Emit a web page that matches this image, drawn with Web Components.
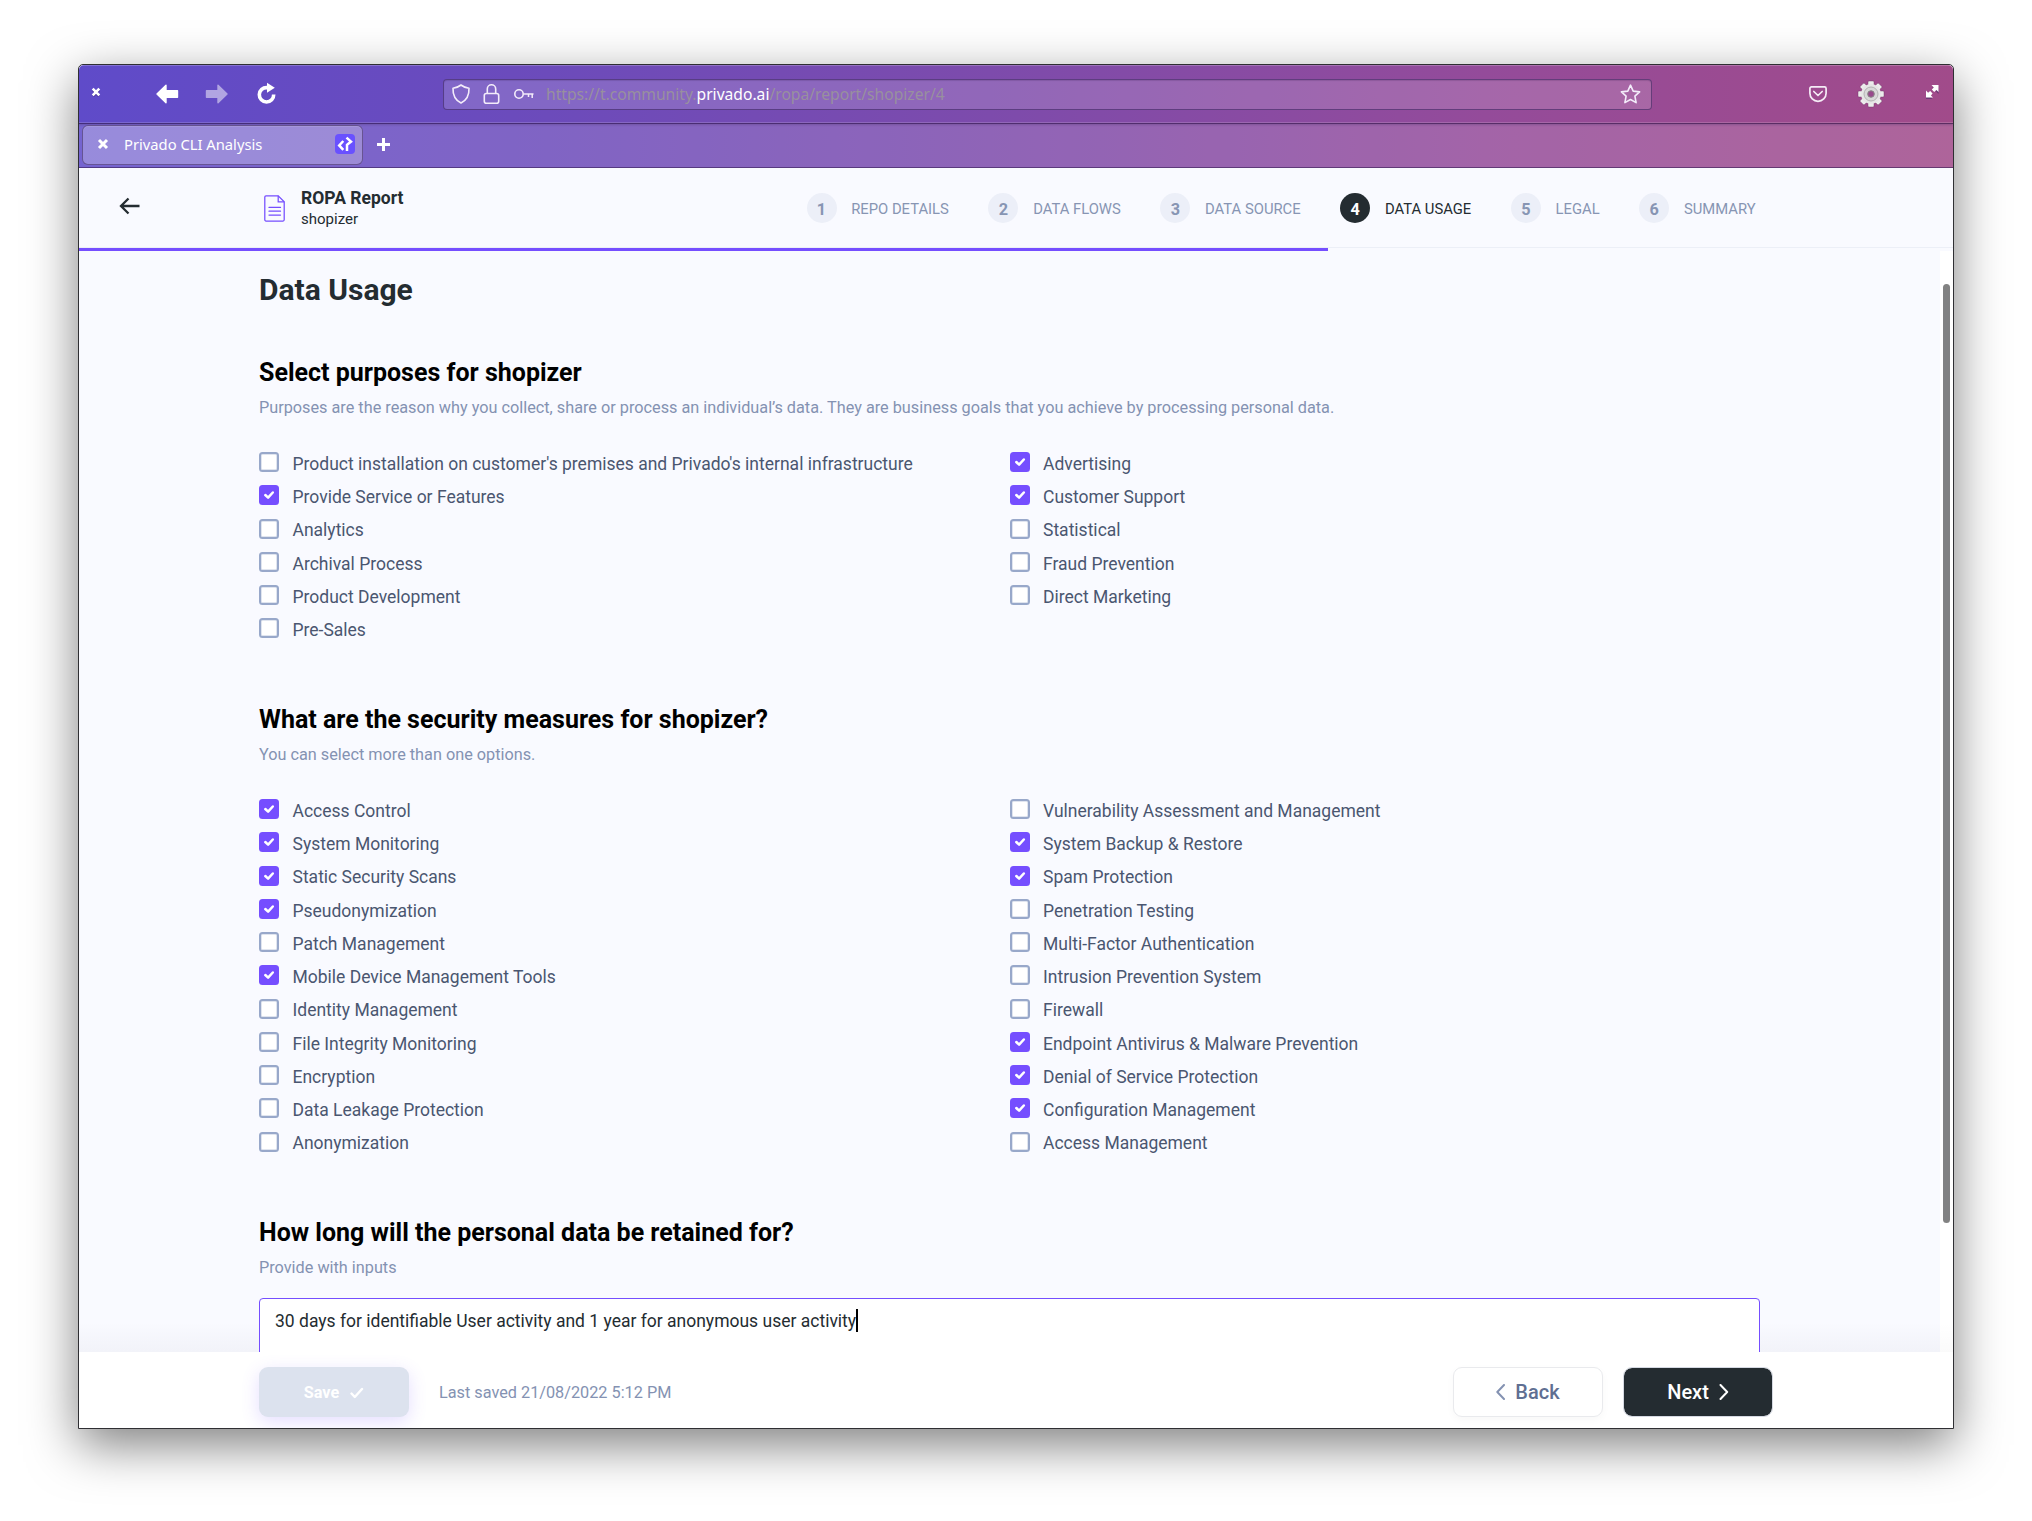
<!DOCTYPE html>
<html lang="en">
<head>
<meta charset="utf-8">
<title>Privado CLI Analysis</title>
<style>
body{margin:0;background:#fff;font-family:Roboto,"Liberation Sans",sans-serif;height:1521px;overflow:hidden}
</style>
</head>
<body>
<browser-window>
  <nav-bar slot="chrome"></nav-bar>
  <tab-bar slot="chrome">Privado CLI Analysis</tab-bar>
  <report-header>
    <span slot="title">ROPA Report</span>
    <span slot="repo">shopizer</span>
    <step-item n="1">REPO DETAILS</step-item>
    <step-item n="2">DATA FLOWS</step-item>
    <step-item n="3">DATA SOURCE</step-item>
    <step-item n="4" active>DATA USAGE</step-item>
    <step-item n="5">LEGAL</step-item>
    <step-item n="6">SUMMARY</step-item>
  </report-header>
  <scroll-pane>
    <page-title>Data Usage</page-title>
    <question-block>
      <span slot="heading">Select purposes for shopizer</span>
      <span slot="hint">Purposes are the reason why you collect, share or process an individual’s data. They are business goals that you achieve by processing personal data.</span>
      <check-item slot="left">Product installation on customer's premises and Privado's internal infrastructure</check-item>
      <check-item slot="left" checked>Provide Service or Features</check-item>
      <check-item slot="left">Analytics</check-item>
      <check-item slot="left">Archival Process</check-item>
      <check-item slot="left">Product Development</check-item>
      <check-item slot="left">Pre-Sales</check-item>
      <check-item slot="right" checked>Advertising</check-item>
      <check-item slot="right" checked>Customer Support</check-item>
      <check-item slot="right">Statistical</check-item>
      <check-item slot="right">Fraud Prevention</check-item>
      <check-item slot="right">Direct Marketing</check-item>
    </question-block>
    <question-block>
      <span slot="heading">What are the security measures for shopizer?</span>
      <span slot="hint">You can select more than one options.</span>
      <check-item slot="left" checked>Access Control</check-item>
      <check-item slot="left" checked>System Monitoring</check-item>
      <check-item slot="left" checked>Static Security Scans</check-item>
      <check-item slot="left" checked>Pseudonymization</check-item>
      <check-item slot="left">Patch Management</check-item>
      <check-item slot="left" checked>Mobile Device Management Tools</check-item>
      <check-item slot="left">Identity Management</check-item>
      <check-item slot="left">File Integrity Monitoring</check-item>
      <check-item slot="left">Encryption</check-item>
      <check-item slot="left">Data Leakage Protection</check-item>
      <check-item slot="left">Anonymization</check-item>
      <check-item slot="right">Vulnerability Assessment and Management</check-item>
      <check-item slot="right" checked>System Backup &amp; Restore</check-item>
      <check-item slot="right" checked>Spam Protection</check-item>
      <check-item slot="right">Penetration Testing</check-item>
      <check-item slot="right">Multi-Factor Authentication</check-item>
      <check-item slot="right">Intrusion Prevention System</check-item>
      <check-item slot="right">Firewall</check-item>
      <check-item slot="right" checked>Endpoint Antivirus &amp; Malware Prevention</check-item>
      <check-item slot="right" checked>Denial of Service Protection</check-item>
      <check-item slot="right" checked>Configuration Management</check-item>
      <check-item slot="right">Access Management</check-item>
    </question-block>
    <question-block>
      <span slot="heading">How long will the personal data be retained for?</span>
      <span slot="hint">Provide with inputs</span>
      <answer-box slot="answer">30 days for identifiable User activity and 1 year for anonymous user activity</answer-box>
    </question-block>
  </scroll-pane>
  <action-bar></action-bar>
</browser-window>

<script>
const define = (name, html) => {
  const template = document.createElement('template');
  template.innerHTML = html;
  customElements.define(name, class extends HTMLElement {
    constructor() {
      super();
      this.attachShadow({ mode: 'open' }).append(template.content.cloneNode(true));
    }
    connectedCallback() {
      const number = this.shadowRoot.querySelector('[data-number]');
      if (number) number.textContent = this.getAttribute('n');
    }
  });
};

define('browser-window', `
<style>
:host{display:flex;flex-direction:column;box-sizing:border-box;width:1876px;height:1365px;margin:64px 78px 0;border:1px solid #2f2f33;border-radius:5px 5px 0 0;background:#f9faff;box-shadow:0 16px 50px rgba(0,0,0,.5)}
.chrome{display:flex;flex-direction:column;flex:none;height:103px;overflow:hidden;border-radius:5px 5px 0 0;background:linear-gradient(90deg,#5f4bc9 0%,#6c4bbb 25%,#7e4bab 50%,#944b9a 75%,#a14b8a 100%)}
</style>
<div class="chrome"><slot name="chrome"></slot></div>
<slot></slot>`);

define('nav-bar', `
<style>
:host{display:flex;align-items:center;box-sizing:border-box;height:59px;flex:none;border-bottom:1px solid rgba(50,28,75,.62);box-shadow:inset 0 1px rgba(255,255,255,.22),inset 0 -1px rgba(255,255,255,.16),0 1px 2px rgba(50,20,80,.35)}
svg{display:block;flex:none;overflow:visible}
.close{margin:-5px 0 0 12px}
.back{margin:-1px 0 0 55px}.fwd{margin:-1px 0 0 26px;opacity:.5}.reload{margin:-2px 0 0 29px}
.url{display:flex;align-items:center;box-sizing:border-box;width:1209px;height:31px;margin:0 0 0 166px;border:1px solid rgba(60,35,95,.62);border-radius:4px;background:rgba(255,255,255,.16);box-shadow:inset 0 1px 1px rgba(50,20,80,.18);font:15.65px/22px "Noto Sans",sans-serif;color:#98909e;padding-left:8px}
.url b{font-weight:400;color:#fff}
.url p{margin:0 0 0 12px;white-space:nowrap;flex:1}
.lock{margin-left:13px}.key{margin-left:14px}.star{margin-right:10px}
.pocket{margin-left:157px}.gear{margin-left:30px}.expand{margin:-5px 0 0 41px}
</style>
<svg class="close" width="10" height="10" viewBox="0 0 10 10"><path d="M2 3l6 6M8 3l-6 6" stroke="#38256f" stroke-opacity=".6" stroke-width="2.6"/><path d="M1.7 1.7l6.6 6.6M8.3 1.7L1.7 8.3" stroke="#fff" stroke-width="2.6"/></svg>
<svg class="back" width="23" height="20" viewBox="0 0 23 20"><path d="M1 10L10 1.2v5.6h11.5v6.4H10v5.6z" fill="#fff" stroke="#fff" stroke-width="1.4" stroke-linejoin="round"/></svg>
<svg class="fwd" width="23" height="20" viewBox="0 0 23 20"><path d="M22 10L13 1.2v5.6H1.5v6.4H13v5.6z" fill="#fff" stroke="#fff" stroke-width="1.4" stroke-linejoin="round"/></svg>
<svg class="reload" width="20" height="22" viewBox="0 0 20 22"><path d="M16.700 12.500A7.200 7.200 0 1 1 10 5.600h2" fill="none" stroke="#fff" stroke-width="3.600"/><path d="M10 .8l7.800 5L10 10.800z" fill="#fff"/></svg>
<div class="url">
  <svg width="18" height="20" viewBox="0 0 18 20"><path d="M9 1c2.7 2.1 5.3 3 8 3.2.3 7-1.600 11.500-8 14.800C2.600 15.700.7 11.200 1 4.200 3.700 4 6.300 3.100 9 1z" fill="none" stroke="#f3ecfa" stroke-width="1.6" stroke-linejoin="round"/></svg>
  <svg class="lock" width="17" height="20" viewBox="0 0 17 20"><rect x="1.300" y="9.500" width="14.400" height="9.700" rx="2" fill="none" stroke="#f3ecfa" stroke-width="1.600"/><path d="M4.300 9.500V5a4.200 4.200 0 0 1 8.400 0v4.500" fill="none" stroke="#f3ecfa" stroke-width="1.600"/></svg>
  <svg class="key" width="20" height="12" viewBox="0 0 20 12"><circle cx="5" cy="6" r="4.200" fill="none" stroke="#f3ecfa" stroke-width="1.600"/><path d="M9.200 6H19.500M18.200 6v4M14.500 6v3" fill="none" stroke="#f3ecfa" stroke-width="1.500"/></svg>
  <p>https://t.community.<b>privado.ai</b>/ropa/report/shopizer/4</p>
  <svg class="star" width="21" height="20" viewBox="0 0 21 20"><path d="M10.500 1.200l2.700 5.900 6.400.8-4.700 4.300 1.200 6.400-5.600-3.100-5.600 3.100 1.200-6.400L1.400 7.900l6.400-.8z" fill="none" stroke="#f3ecfa" stroke-width="1.600" stroke-linejoin="round"/></svg>
</div>
<svg class="pocket" width="18" height="16" viewBox="0 0 18 16"><path d="M2.500.9h13A1.600 1.600 0 0 1 17.100 2.500v4.700a8.100 8.100 0 0 1-16.200 0V2.500A1.600 1.600 0 0 1 2.500.9z" fill="none" stroke="#f5ecf6" stroke-width="1.700"/><path d="M4.800 5.500L9 9.500l4.200-4" fill="none" stroke="#f5ecf6" stroke-width="1.700" stroke-linecap="round" stroke-linejoin="round"/></svg>
<svg class="gear" width="28" height="28" viewBox="-14 -14 28 28"><g fill="#ececec" stroke="#6d3463" stroke-opacity=".55" stroke-width=".8"><rect x="-3" y="-13" width="6" height="26" rx="1"/><rect x="-3" y="-13" width="6" height="26" rx="1" transform="rotate(45)"/><rect x="-3" y="-13" width="6" height="26" rx="1" transform="rotate(90)"/><rect x="-3" y="-13" width="6" height="26" rx="1" transform="rotate(135)"/></g><circle r="10" fill="#e6e6e6"/><circle r="7" fill="#d8d8d8" stroke="#b4b4b4" stroke-width="1"/><circle r="3.300" fill="#98498c" stroke="#888" stroke-width="1"/></svg>
<svg class="expand" width="13" height="14" viewBox="0 0 13 14"><path d="M6 2.500h6.500V9zM0 7.500V14h6.500z" fill="#4a2b68" opacity=".6"/><path d="M5.500 0H12.500V7l-2.100-2.100L8.200 7 5.800 4.600 7.800 2.400zM0 5.500V12.500H7L4.900 10.400 6.600 8.400 4.200 6 2.100 7.800z" fill="#fff"/></svg>`);

define('tab-bar', `
<style>
:host{display:flex;align-items:flex-start;box-sizing:border-box;height:44px;border-bottom:1px solid rgba(55,28,85,.6);background:rgba(255,255,255,.14);padding:1px 0 0 3px}
.tab{display:flex;align-items:center;box-sizing:border-box;width:281px;height:40px;border:1px solid rgba(60,40,90,.55);border-radius:6px;background:rgba(255,255,255,.25);color:#fff;font:14.75px/20px "Noto Sans",sans-serif;padding:0 7px 0 14px;box-shadow:inset 0 1px rgba(255,255,255,.12)}
.tab p{margin:-2px 0 0 15px;flex:1;white-space:nowrap}
svg{display:block;flex:none}
.x{margin-top:-3px}.fav{margin-top:-2px}
.plus{margin:13px 0 0 14px}
</style>
<div class="tab">
  <svg class="x" width="12" height="12" viewBox="0 0 12 12"><path d="M2 2l8 8M10 2l-8 8" stroke="#fff" stroke-width="3"/></svg>
  <p><slot></slot></p>
  <svg class="fav" width="20" height="20" viewBox="0 0 20 20"><rect width="20" height="20" rx="4" fill="#6951ff"/><path d="M8.300 7L4.200 11.400l4.100 4.500M11.500 3.600L16 7.600l-4 3.200V17" fill="none" stroke="#fff" stroke-width="2.500"/></svg>
</div>
<svg class="plus" width="13" height="13" viewBox="0 0 13 13"><path d="M6.500 0v13M0 6.500h13" stroke="#fff" stroke-width="3"/></svg>`);

define('report-header', `
<style>
:host{display:block;flex:none;height:83px}
.bar{display:flex;box-sizing:border-box;height:80px;border-bottom:1px solid #eceff7;color:#242c31}
svg{display:block;flex:none}
.back{margin:29px 0 0 39.500px}
.doc{margin:26.500px 0 0 124px}
.names{display:flex;flex-direction:column;gap:2px;margin:20px 0 0 16.500px;width:505.500px}
.t{font:700 17.500px/20px Roboto,sans-serif}
.r{font:15px/18px Roboto,sans-serif}
.steps{display:flex;gap:39.600px;margin-top:25px}
.progress{height:3px;width:66.667%;background:#754eff}
</style>
<div class="bar">
  <svg class="back" width="21" height="18" viewBox="0 0 21 18"><path d="M20.500 9H2M9.500 1.500L2 9l7.500 7.500" fill="none" stroke="#242c31" stroke-width="2.300"/></svg>
  <svg class="doc" width="21" height="27" viewBox="0 0 21 27"><g fill="none" stroke="#754eff" stroke-width="1.250"><path d="M.8 2a1.200 1.200 0 0 1 1.200-1.200h12.200l6 6V24.800a1.200 1.200 0 0 1-1.200 1.200H2a1.200 1.200 0 0 1-1.200-1.200z"/><path d="M14.200.8V6.800H20.200"/><path d="M5 12.400h11.500M5 16.200h11.500M5 20h11.500" stroke-linecap="round"/></g></svg>
  <div class="names"><div class="t"><slot name="title"></slot></div><div class="r"><slot name="repo"></slot></div></div>
  <div class="steps"><slot></slot></div>
</div>
<div class="progress"></div>`);

define('step-item', `
<style>
:host{display:flex;gap:14.700px;height:30px;color:#8795b3;white-space:nowrap}
.n{box-sizing:border-box;width:30px;height:30px;padding-top:7px;border-radius:50%;background:#eceff8;text-align:center;font:700 16.250px/19px Roboto,sans-serif}
.l{font:14.800px/18px Roboto,sans-serif;padding-top:7px}
:host([active]){color:#242c31}
:host([active]) .n{background:#242c31;color:#fff}
</style>
<div class="n" data-number></div><div class="l"><slot></slot></div>`);

define('scroll-pane', `
<style>
:host{display:flex;flex:none;height:1101px;overflow:hidden}
.content{flex:1;padding:21px 180px 0;background:linear-gradient(to top,rgba(20,20,60,.032),rgba(20,20,60,0) 30px)}
.track{box-sizing:border-box;width:13px;padding:33px 3px 0;background:linear-gradient(to top,rgba(0,0,0,.02),rgba(0,0,0,0) 30px),#fff}
.thumb{width:7px;height:939px;border-radius:4px;background:#828282}
</style>
<div class="content"><slot></slot></div>
<div class="track"><div class="thumb"></div></div>`);

define('page-title', `
<style>:host{display:block;font:700 30px/35px Roboto,sans-serif;color:#242c31;margin-bottom:51px}</style>
<slot></slot>`);

define('question-block', `
<style>
:host{display:block;width:1501px;margin-bottom:67.500px}
h2{margin:0 0 11px;font:700 25px/29px Roboto,sans-serif;color:#000}
p{margin:0;font:16.250px/19px Roboto,sans-serif;color:#8492b2}
.cols{display:flex;padding-top:35px}
.cols>div{flex:1}
.answer{margin-top:-14px}
</style>
<h2><slot name="heading"></slot></h2>
<p><slot name="hint"></slot></p>
<div class="cols"><div><slot name="left"></slot></div><div><slot name="right"></slot></div></div>
<div class="answer"><slot name="answer"></slot></div>`);

define('check-item', `
<style>
:host{display:flex;gap:13.500px;height:33.250px}
.box{box-sizing:border-box;width:20px;height:20px;flex:none;border:2px solid #98a8ca;border-radius:3.500px;background:#fff;box-shadow:inset 0 0 0 1px rgba(152,168,202,.3)}
svg{display:none}
.label{margin-top:1.900px;font:17.500px/20px Roboto,sans-serif;color:#4a5670;white-space:nowrap}
:host([checked]) .box{border:0;background:#754eff;box-shadow:none}
:host([checked]) svg{display:block}
</style>
<div class="box"><svg width="20" height="20" viewBox="0 0 20 20"><path d="M6.300 10l2.800 2.700 4.700-5.200" fill="none" stroke="#fff" stroke-width="2.500" stroke-linecap="round" stroke-linejoin="round"/></svg></div>
<div class="label"><slot></slot></div>`);

define('answer-box', `
<style>
:host{display:flex;align-items:flex-start;box-sizing:border-box;width:1501px;height:120px;padding:12px 15px;border:1px solid #754eff;border-radius:4px;background:#fff;font:17.500px/20px Roboto,sans-serif;color:#242c31}
i{width:1.500px;height:23px;margin-top:-2px;background:#000}
</style>
<slot></slot><i></i>`);

define('action-bar', `
<style>
:host{display:flex;align-items:flex-start;box-sizing:border-box;height:76px;flex:none;padding:15px 180px 0;background:#fff;overflow:hidden}
.b{display:flex;align-items:center;justify-content:center;box-sizing:border-box;width:150px;height:50px;border-radius:9px}
svg{display:block}
.save{gap:11px;padding-top:1px;background:#dce2ee;color:#fff;font:700 16.250px/20px Roboto,sans-serif;box-shadow:0 5px 18px rgba(117,78,255,.19)}
.saved{flex:1;margin:16px 0 0 30px;font:16.250px/19px Roboto,sans-serif;color:#8492b2}
.back{gap:10px;border:1px solid #e9eaed;color:#606f92;font:500 20px/24px Roboto,sans-serif;box-shadow:0 3px 8px rgba(0,0,0,.03)}
.next{gap:10px;margin:0 0 0 20px;background:#242c31;border:1px solid #d5d9e2;background-clip:padding-box;color:#fff;font:500 20px/24px Roboto,sans-serif}
</style>
<div class="b save">Save<svg width="14" height="12" viewBox="0 0 14 12"><path d="M1.500 6.500l3.300 3.500 7.200-8" fill="none" stroke="#fff" stroke-width="2.400" stroke-linecap="round" stroke-linejoin="round"/></svg></div>
<div class="saved">Last saved 21/08/2022 5:12 PM</div>
<div class="b back"><svg width="9" height="16" viewBox="0 0 9 16"><path d="M8 1L1.300 8 8 15" fill="none" stroke="#8492b2" stroke-width="2" stroke-linecap="round" stroke-linejoin="round"/></svg>Back</div>
<div class="b next">Next<svg width="10" height="16" viewBox="0 0 10 16"><path d="M1.500 1L8.200 8l-6.700 7" fill="none" stroke="#fff" stroke-width="2" stroke-linecap="round" stroke-linejoin="round"/></svg></div>`);
</script>
</body>
</html>
